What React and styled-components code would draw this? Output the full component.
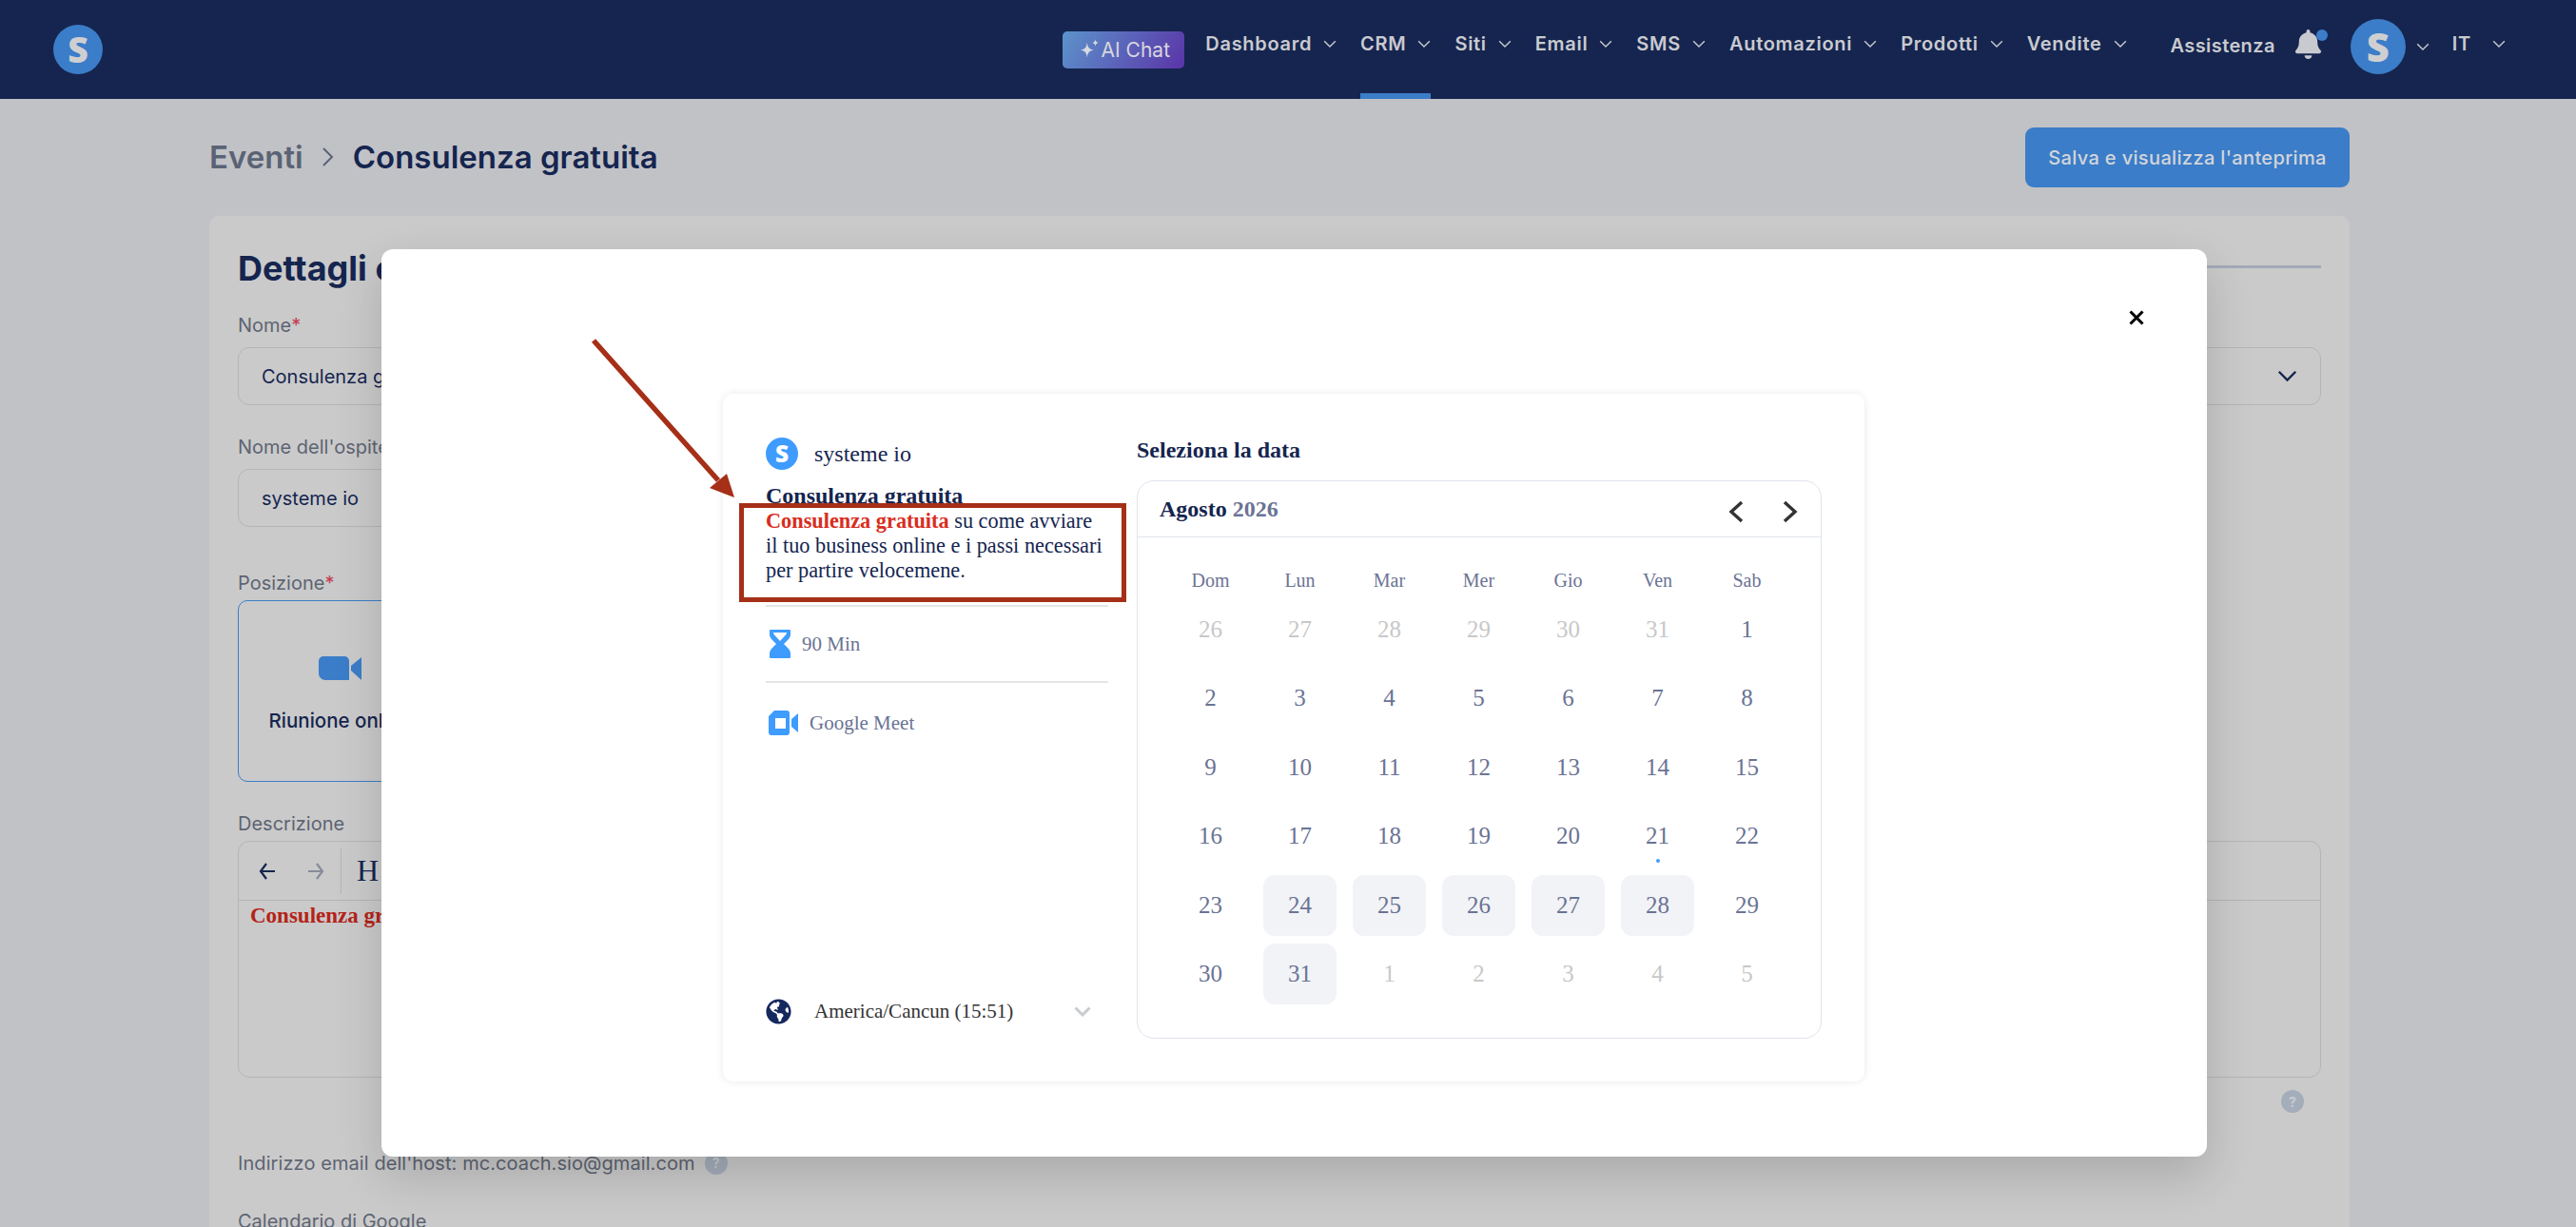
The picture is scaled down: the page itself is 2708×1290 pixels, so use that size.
import React from 'react';
import styled, { createGlobalStyle } from 'styled-components';
import { FaGlobeAmericas, FaBell } from 'react-icons/fa';

const navItems = ['Dashboard', 'CRM', 'Siti', 'Email', 'SMS', 'Automazioni', 'Prodotti', 'Vendite'];
const weekDays = ['Dom', 'Lun', 'Mar', 'Mer', 'Gio', 'Ven', 'Sab'];
const leading = [26, 27, 28, 29, 30, 31];
const trailing = [1, 2, 3, 4, 5];
const available = [24, 25, 26, 27, 28, 31];

const Chevron = ({ width = 14, color = '#c9cad0', weight = 1.2 }) => (
  <svg width={width} height={width * 0.6} viewBox="0 0 12 7.2" fill="none" stroke={color} strokeWidth={weight}>
    <path d="M1 1l5 5 5-5" />
  </svg>
);

function App() {
  return (
    <Page>
      <GlobalStyle />
      <Header>
        <Logo $size={52}>S</Logo>
        <HeaderRight>
          <AiChat>
            <svg width="24" height="26" viewBox="0 0 22 24" fill="#d8d8e2">
              <path d="M9 5c.6 5 2 6.500 6.500 7.500C11 13.500 9.600 15 9 20c-.6-5-2-6.500-6.500-7.500C7 11.500 8.400 10 9 5z" />
              <path d="M17 2c.3 2.200 1 3 3 3.500-2 .5-2.700 1.300-3 3.500-.3-2.200-1-3-3-3.500 2-.5 2.700-1.300 3-3.500z" />
            </svg>
            AI Chat
          </AiChat>
          <Nav>
            {navItems.map((item) => (
              <NavItem key={item} $active={item === 'CRM'}>
                {item}
                <Chevron />
              </NavItem>
            ))}
          </Nav>
          <Assistance>Assistenza</Assistance>
          <BellWrap>
            <FaBell size={31} color="#c9cad0" />
            <BellDot />
          </BellWrap>
          <AccountGroup>
            <Logo $size={58}>S</Logo>
            <Chevron />
          </AccountGroup>
          <NavItem $lang>
            IT
            <Chevron />
          </NavItem>
        </HeaderRight>
      </Header>

      <Main>
        <TopBar>
          <Breadcrumb>
            <Crumb>Eventi</Crumb>
            <svg width="14" height="24" viewBox="0 0 14 24" fill="none" stroke="#5a6375" strokeWidth="2">
              <path d="M2 3l9 9-9 9" />
            </svg>
            <CrumbCurrent>Consulenza gratuita</CrumbCurrent>
          </Breadcrumb>
          <SaveButton>Salva e visualizza l'anteprima</SaveButton>
        </TopBar>

        <Card>
          <TitleRow>
            <CardTitle>Dettagli evento</CardTitle>
            <TabLine />
          </TitleRow>
          <TwoCols>
            <Field>
              <Label>Nome<Star>*</Star></Label>
              <Input>Consulenza gratuita</Input>
            </Field>
            <Field>
              <Label>Durata</Label>
              <Input $select>
                90 minuti
                <Chevron width={21} color="#15254f" weight={1.4} />
              </Input>
            </Field>
          </TwoCols>
          <Field $half $top={32}>
            <Label>Nome dell'ospite</Label>
            <Input>systeme io</Input>
          </Field>
          <Field $half $top={47}>
            <Label $tight>Posizione<Star>*</Star></Label>
            <LocationCard>
              <svg width="45" height="25" viewBox="0 0 45 25" fill="#3b7dc8">
                <path d="M5 0h22a5 5 0 0 1 5 5v20H7a7 7 0 0 1-7-7V5a5 5 0 0 1 5-5z" />
                <path d="M34 10L45 1v24L34 15z" />
              </svg>
              <LocationName>Riunione online</LocationName>
            </LocationCard>
          </Field>
          <Field $top={32}>
            <Label $tight>Descrizione</Label>
            <Editor>
              <EditorTools>
                <ToolIcons>
                  <svg width="20" height="20" viewBox="0 0 20 20" fill="none" stroke="#15254f" strokeWidth="2.200">
                    <path d="M18 10H3M9 2l-6 8 6 8" />
                  </svg>
                  <svg width="20" height="20" viewBox="0 0 20 20" fill="none" stroke="#868c99" strokeWidth="2.200">
                    <path d="M2 10h15M11 2l6 8-6 8" />
                  </svg>
                </ToolIcons>
                <ToolDivider />
                <HeadingTool>H</HeadingTool>
              </EditorTools>
              <EditorBody>Consulenza gratuita su come avviare il tuo business online</EditorBody>
            </Editor>
            <HelpRow>
              <Help>?</Help>
            </HelpRow>
          </Field>
          <HostLine>
            Indirizzo email dell'host: mc.coach.sio@gmail.com
            <Help>?</Help>
          </HostLine>
          <Field $top={37}>
            <Label>Calendario di Google</Label>
          </Field>
        </Card>
      </Main>

      <Modal>
        <CloseButton>
          <svg width="16" height="16" viewBox="0 0 16 16" fill="none" stroke="#000" strokeWidth="3">
            <path d="M1.500 1.500l13 13M14.500 1.500l-13 13" />
          </svg>
        </CloseButton>
        <Booking>
          <Sidebar>
            <OwnerRow>
              <Logo $size={34} $bright>S</Logo>
              <OwnerName>systeme io</OwnerName>
            </OwnerRow>
            <EventName>Consulenza gratuita</EventName>
            <EventText>
              <RedStrong>Consulenza gratuita</RedStrong> su come avviare il tuo business online e i passi necessari per partire velocemene.
            </EventText>
            <InfoRow $divided>
              <svg width="22" height="30" viewBox="0 0 22 30" fill="#3f9cff">
                <path fillRule="evenodd" d="M1 0h20a1 1 0 0 1 1 1v4c0 2-1 4-3 6l-4 4 4 4c2 2 3 4 3 6v4a1 1 0 0 1-1 1H1a1 1 0 0 1-1-1v-4c0-2 1-4 3-6l4-4-4-4C1 9 0 7 0 5V1a1 1 0 0 1 1-1zm3 3c0 1 .5 2 1.500 3l5.500 6 5.500-6c1-1 1.500-2 1.500-3z" />
              </svg>
              <InfoText>90 Min</InfoText>
            </InfoRow>
            <InfoRow>
              <svg width="31" height="26" viewBox="0 0 31 26" fill="#3f9cff">
                <path fillRule="evenodd" d="M6 0h13a3 3 0 0 1 3 3v20a3 3 0 0 1-3 3H3a3 3 0 0 1-3-3V6zM7 8v11h11V8z" />
                <path d="M24 9l7-6v20l-7-6z" />
              </svg>
              <InfoText>Google Meet</InfoText>
            </InfoRow>
            <TimezoneRow>
              <FaGlobeAmericas size={27} color="#15295f" />
              <TimezoneText>America/Cancun (15:51)</TimezoneText>
              <Chevron width={18} color="#c9cbd1" weight={2} />
            </TimezoneRow>
          </Sidebar>
          <CalendarColumn>
            <CalendarHeading>Seleziona la data</CalendarHeading>
            <Calendar>
              <MonthBar>
                <MonthName>Agosto <MonthYear>2026</MonthYear></MonthName>
                <MonthArrows>
                  <svg width="16" height="24" viewBox="0 0 16 24" fill="none" stroke="#333" strokeWidth="3.400">
                    <path d="M14 2L3 12l11 10" />
                  </svg>
                  <svg width="16" height="24" viewBox="0 0 16 24" fill="none" stroke="#333" strokeWidth="3.400">
                    <path d="M2 2l11 10L2 22" />
                  </svg>
                </MonthArrows>
              </MonthBar>
              <Weekdays>
                {weekDays.map((d) => <Weekday key={d}>{d}</Weekday>)}
              </Weekdays>
              <Days>
                {leading.map((d) => <Day key={`p${d}`} $muted>{d}</Day>)}
                {Array.from({ length: 31 }, (_, i) => i + 1).map((d) => (
                  <Day key={d} $available={available.includes(d)} $today={d === 21}>{d}</Day>
                ))}
                {trailing.map((d) => <Day key={`n${d}`} $muted>{d}</Day>)}
              </Days>
            </Calendar>
          </CalendarColumn>
        </Booking>

        <ArrowMark width="160" height="180" viewBox="0 0 160 180">
          <path d="M3 3L134 150" stroke="#a62f17" strokeWidth="5.500" fill="none" />
          <path d="M151 168L125 158L143 143z" fill="#a62f17" />
        </ArrowMark>
        <RedBox />
      </Modal>
    </Page>
  );
}

const GlobalStyle = createGlobalStyle`
  html, body {
    margin: 0;
    padding: 0;
    height: 100%;
    overflow: hidden;
    background: #c1c2c6;
  }
  * { box-sizing: border-box; }
`;

const Page = styled.div`
  position: relative;
  width: 2708px;
  height: 1290px;
  overflow: hidden;
  background: #c1c2c6;
  font-family: 'Inter', sans-serif;
`;

const Header = styled.header`
  height: 104px;
  background: #15254f;
  display: flex;
  align-items: center;
  justify-content: space-between;
  padding: 0 74px 0 56px;
`;

const Logo = styled.div`
  width: ${(p) => p.$size}px;
  height: ${(p) => p.$size}px;
  border-radius: 50%;
  background: ${(p) => (p.$bright ? '#3f9cff' : '#3b7dc8')};
  color: ${(p) => (p.$bright ? '#fff' : '#cfcfd2')};
  font-family: 'Open Sans', sans-serif;
  font-weight: 800;
  font-size: ${(p) => p.$size * 0.72}px;
  line-height: 1;
  display: flex;
  align-items: center;
  justify-content: center;
  flex-shrink: 0;
`;

const HeaderRight = styled.div`
  display: flex;
  align-items: center;
  height: 100%;
`;

const AiChat = styled.div`
  width: 128px;
  height: 39px;
  margin-right: 22px;
  border-radius: 5px;
  background: linear-gradient(120deg, #5c93cb, #5a34a8);
  color: #d6d6de;
  font-size: 21px;
  display: flex;
  align-items: center;
  justify-content: center;
  gap: 1px;
`;

const Nav = styled.nav`
  display: flex;
  height: 100%;
  gap: 25px;
`;

const NavItem = styled.div`
  display: flex;
  align-items: center;
  gap: ${(p) => (p.$lang ? '22px' : '12px')};
  color: #c9cad0;
  font-size: 20px;
  font-weight: 600;
  letter-spacing: 0.7px;
  height: 100%;
  margin-left: ${(p) => (p.$lang ? '24px' : '0')};
  padding-bottom: 6px;
  border-bottom: 6px solid ${(p) => (p.$active ? '#3b7dc8' : 'transparent')};
`;

const Assistance = styled.div`
  color: #c9cad0;
  font-size: 20px;
  font-weight: 600;
  letter-spacing: 0.4px;
  margin-left: 46px;
  padding-bottom: 8px;
`;

const BellWrap = styled.div`
  position: relative;
  display: flex;
  margin: 0 0 12px 19px;
`;

const BellDot = styled.span`
  position: absolute;
  top: 0;
  right: -5px;
  width: 12px;
  height: 12px;
  border-radius: 50%;
  background: #3b7dc8;
`;

const AccountGroup = styled.div`
  display: flex;
  align-items: center;
  gap: 11px;
  margin: 0 0 6px 29px;
`;

const Main = styled.main`
  padding: 0 238px 0 220px;
`;

const TopBar = styled.div`
  display: flex;
  align-items: center;
  justify-content: space-between;
  height: 123px;
`;

const Breadcrumb = styled.div`
  display: flex;
  align-items: center;
  gap: 19px;
  margin-bottom: 1px;
`;

const Crumb = styled.span`
  color: #5a6375;
  font-size: 33px;
  font-weight: 600;
`;

const CrumbCurrent = styled(Crumb)`
  color: #15254f;
`;

const SaveButton = styled.button`
  width: 341px;
  height: 63px;
  border: none;
  border-radius: 9px;
  background: #3b7dc8;
  color: #d3d5da;
  font-family: inherit;
  font-size: 20px;
  font-weight: 500;
  letter-spacing: 0.35px;
`;

const Card = styled.section`
  background: #cacaca;
  border-radius: 10px;
  padding: 32px 30px 30px;
  height: 1100px;
`;

const TitleRow = styled.div`
  display: flex;
  align-items: flex-start;
  justify-content: space-between;
  margin-bottom: 25px;
`;

const CardTitle = styled.h2`
  margin: 0;
  color: #15254f;
  font-size: 36px;
  line-height: 46px;
  font-weight: 700;
`;

const TabLine = styled.div`
  width: 50%;
  height: 3px;
  margin-top: 20px;
  background: #a4a9b9;
`;

const TwoCols = styled.div`
  display: grid;
  grid-template-columns: 1fr 1fr;
  gap: 30px;
`;

const Field = styled.div`
  width: ${(p) => (p.$half ? '50%' : '100%')};
  margin-top: ${(p) => p.$top || 0}px;
`;

const Label = styled.div`
  color: #5d6472;
  font-size: 20px;
  line-height: 24px;
  margin-bottom: ${(p) => (p.$tight ? '6px' : '11px')};
`;

const Star = styled.span`
  color: #c43a50;
`;

const Input = styled.div`
  height: 61px;
  border: 1px solid #b3b5ba;
  border-radius: 12px;
  padding: 0 24px;
  color: #15254f;
  font-size: 20px;
  display: flex;
  align-items: center;
  justify-content: ${(p) => (p.$select ? 'space-between' : 'flex-start')};
`;

const LocationCard = styled.div`
  width: 215px;
  height: 191px;
  padding-top: 7px;
  border: 1.500px solid #3b7dc8;
  border-radius: 10px;
  display: flex;
  flex-direction: column;
  align-items: center;
  justify-content: center;
  gap: 30px;
`;

const LocationName = styled.div`
  color: #15254f;
  font-size: 20.500px;
  line-height: 25px;
  font-weight: 500;
  white-space: nowrap;
`;

const Editor = styled.div`
  height: 249px;
  border: 1px solid #b3b5ba;
  border-radius: 12px;
  display: flex;
  flex-direction: column;
`;

const EditorTools = styled.div`
  height: 62px;
  flex-shrink: 0;
  border-bottom: 1px solid #b3b5ba;
  display: flex;
  align-items: center;
  padding-left: 20px;
  gap: 16px;
`;

const ToolIcons = styled.div`
  display: flex;
  gap: 31px;
`;

const ToolDivider = styled.span`
  width: 1px;
  height: 48px;
  background: #b3b5ba;
`;

const HeadingTool = styled.span`
  color: #15254f;
  font-family: 'Liberation Serif', serif;
  font-size: 32px;
`;

const EditorBody = styled.div`
  padding: 3px 12px;
  color: #b42318;
  font-family: 'Liberation Serif', serif;
  font-size: 23px;
  line-height: 26px;
  font-weight: 700;
`;

const HelpRow = styled.div`
  display: flex;
  justify-content: flex-end;
  padding: 13px 18px 0 0;
`;

const Help = styled.span`
  width: 24px;
  height: 24px;
  border-radius: 50%;
  background: #a4adba;
  color: #c9ccd2;
  font-size: 14px;
  font-weight: 700;
  display: inline-flex;
  align-items: center;
  justify-content: center;
`;

const HostLine = styled.div`
  display: flex;
  align-items: center;
  gap: 10px;
  color: #5d6472;
  font-size: 20px;
  letter-spacing: 0.08px;
  line-height: 24px;
  margin-top: 41px;
`;

const Modal = styled.div`
  position: absolute;
  left: 401px;
  top: 262px;
  width: 1919px;
  height: 954px;
  padding: 152px 0 0 359px;
  background: #fff;
  border-radius: 12px;
  box-shadow: 0 20px 50px rgba(0, 0, 0, 0.16);
`;

const CloseButton = styled.div`
  position: absolute;
  top: 64px;
  right: 66px;
  display: flex;
`;

const Booking = styled.div`
  width: 1200px;
  height: 723px;
  padding: 46px 45px 45px;
  border-radius: 10px;
  background: #fff;
  box-shadow: 0 0 8px rgba(0, 0, 0, 0.09);
  display: flex;
  gap: 30px;
  font-family: 'Liberation Serif', serif;
`;

const Sidebar = styled.div`
  width: 360px;
  padding-bottom: 15px;
  display: flex;
  flex-direction: column;
`;

const OwnerRow = styled.div`
  display: flex;
  align-items: center;
  gap: 17px;
`;

const OwnerName = styled.div`
  color: #15254f;
  font-size: 24px;
`;

const EventName = styled.div`
  margin-top: 14px;
  color: #15254f;
  font-size: 24px;
  line-height: 26px;
  font-weight: 700;
`;

const EventText = styled.div`
  height: 104px;
  flex-shrink: 0;
  color: #15254f;
  font-size: 22.300px;
  line-height: 26px;
  padding-top: 1px;
  border-bottom: 2px solid #e5e5e5;
`;

const RedStrong = styled.strong`
  color: #d92d20;
`;

const InfoRow = styled.div`
  height: ${(p) => (p.$divided ? '80px' : '84px')};
  flex-shrink: 0;
  display: flex;
  align-items: center;
  gap: 12px;
  padding-left: ${(p) => (p.$divided ? '4px' : '3px')};
  border-bottom: ${(p) => (p.$divided ? '2px solid #e5e5e5' : 'none')};
`;

const InfoText = styled.span`
  color: #6b7394;
  font-size: 21px;
`;

const TimezoneRow = styled.div`
  margin-top: auto;
  display: flex;
  align-items: center;
  padding-right: 18px;
`;

const TimezoneText = styled.span`
  flex: 1;
  margin-left: 24px;
  color: #333;
  font-size: 21px;
`;

const CalendarColumn = styled.div`
  flex: 1;
  display: flex;
  flex-direction: column;
`;

const CalendarHeading = styled.div`
  color: #15254f;
  font-size: 24px;
  line-height: 26px;
  font-weight: 700;
  margin-bottom: 19px;
`;

const Calendar = styled.div`
  height: 587px;
  flex-shrink: 0;
  border: 1px solid #dfe3ec;
  border-radius: 18px;
`;

const MonthBar = styled.div`
  height: 59px;
  border-bottom: 1px solid #dfe3ec;
  display: flex;
  align-items: center;
  justify-content: space-between;
  padding: 0 24px 0 23px;
`;

const MonthName = styled.div`
  color: #15254f;
  font-size: 24px;
  font-weight: 700;
`;

const MonthYear = styled.span`
  color: #6b7394;
`;

const MonthArrows = styled.div`
  display: flex;
  gap: 41px;
  margin-top: 6px;
`;

const Weekdays = styled.div`
  display: grid;
  grid-template-columns: repeat(7, 77px);
  column-gap: 17px;
  padding: 33px 0 0 38px;
  height: 65px;
`;

const Weekday = styled.div`
  color: #6b7394;
  font-size: 20px;
  line-height: 24px;
  text-align: center;
`;

const Days = styled.div`
  display: grid;
  grid-template-columns: repeat(7, 77px);
  grid-auto-rows: 64px;
  column-gap: 17px;
  row-gap: 8.400px;
  padding-left: 38px;
`;

const Day = styled.div`
  position: relative;
  display: flex;
  align-items: center;
  justify-content: center;
  border-radius: 12px;
  font-size: 25px;
  color: ${(p) => (p.$muted ? '#c8c8c8' : '#6b7394')};
  background: ${(p) => (p.$available ? '#f2f3f7' : 'transparent')};

  ${(p) => p.$today && `
    &::after {
      content: '';
      position: absolute;
      left: 50%;
      bottom: 4px;
      width: 4px;
      height: 4px;
      margin-left: -2px;
      border-radius: 50%;
      background: #3f9cff;
    }
  `}
`;

const ArrowMark = styled.svg`
  position: absolute;
  left: 220px;
  top: 93px;
`;

const RedBox = styled.div`
  position: absolute;
  left: 376px;
  top: 267px;
  width: 407px;
  height: 104px;
  border: 5px solid #a62f17;
`;

export default App;
